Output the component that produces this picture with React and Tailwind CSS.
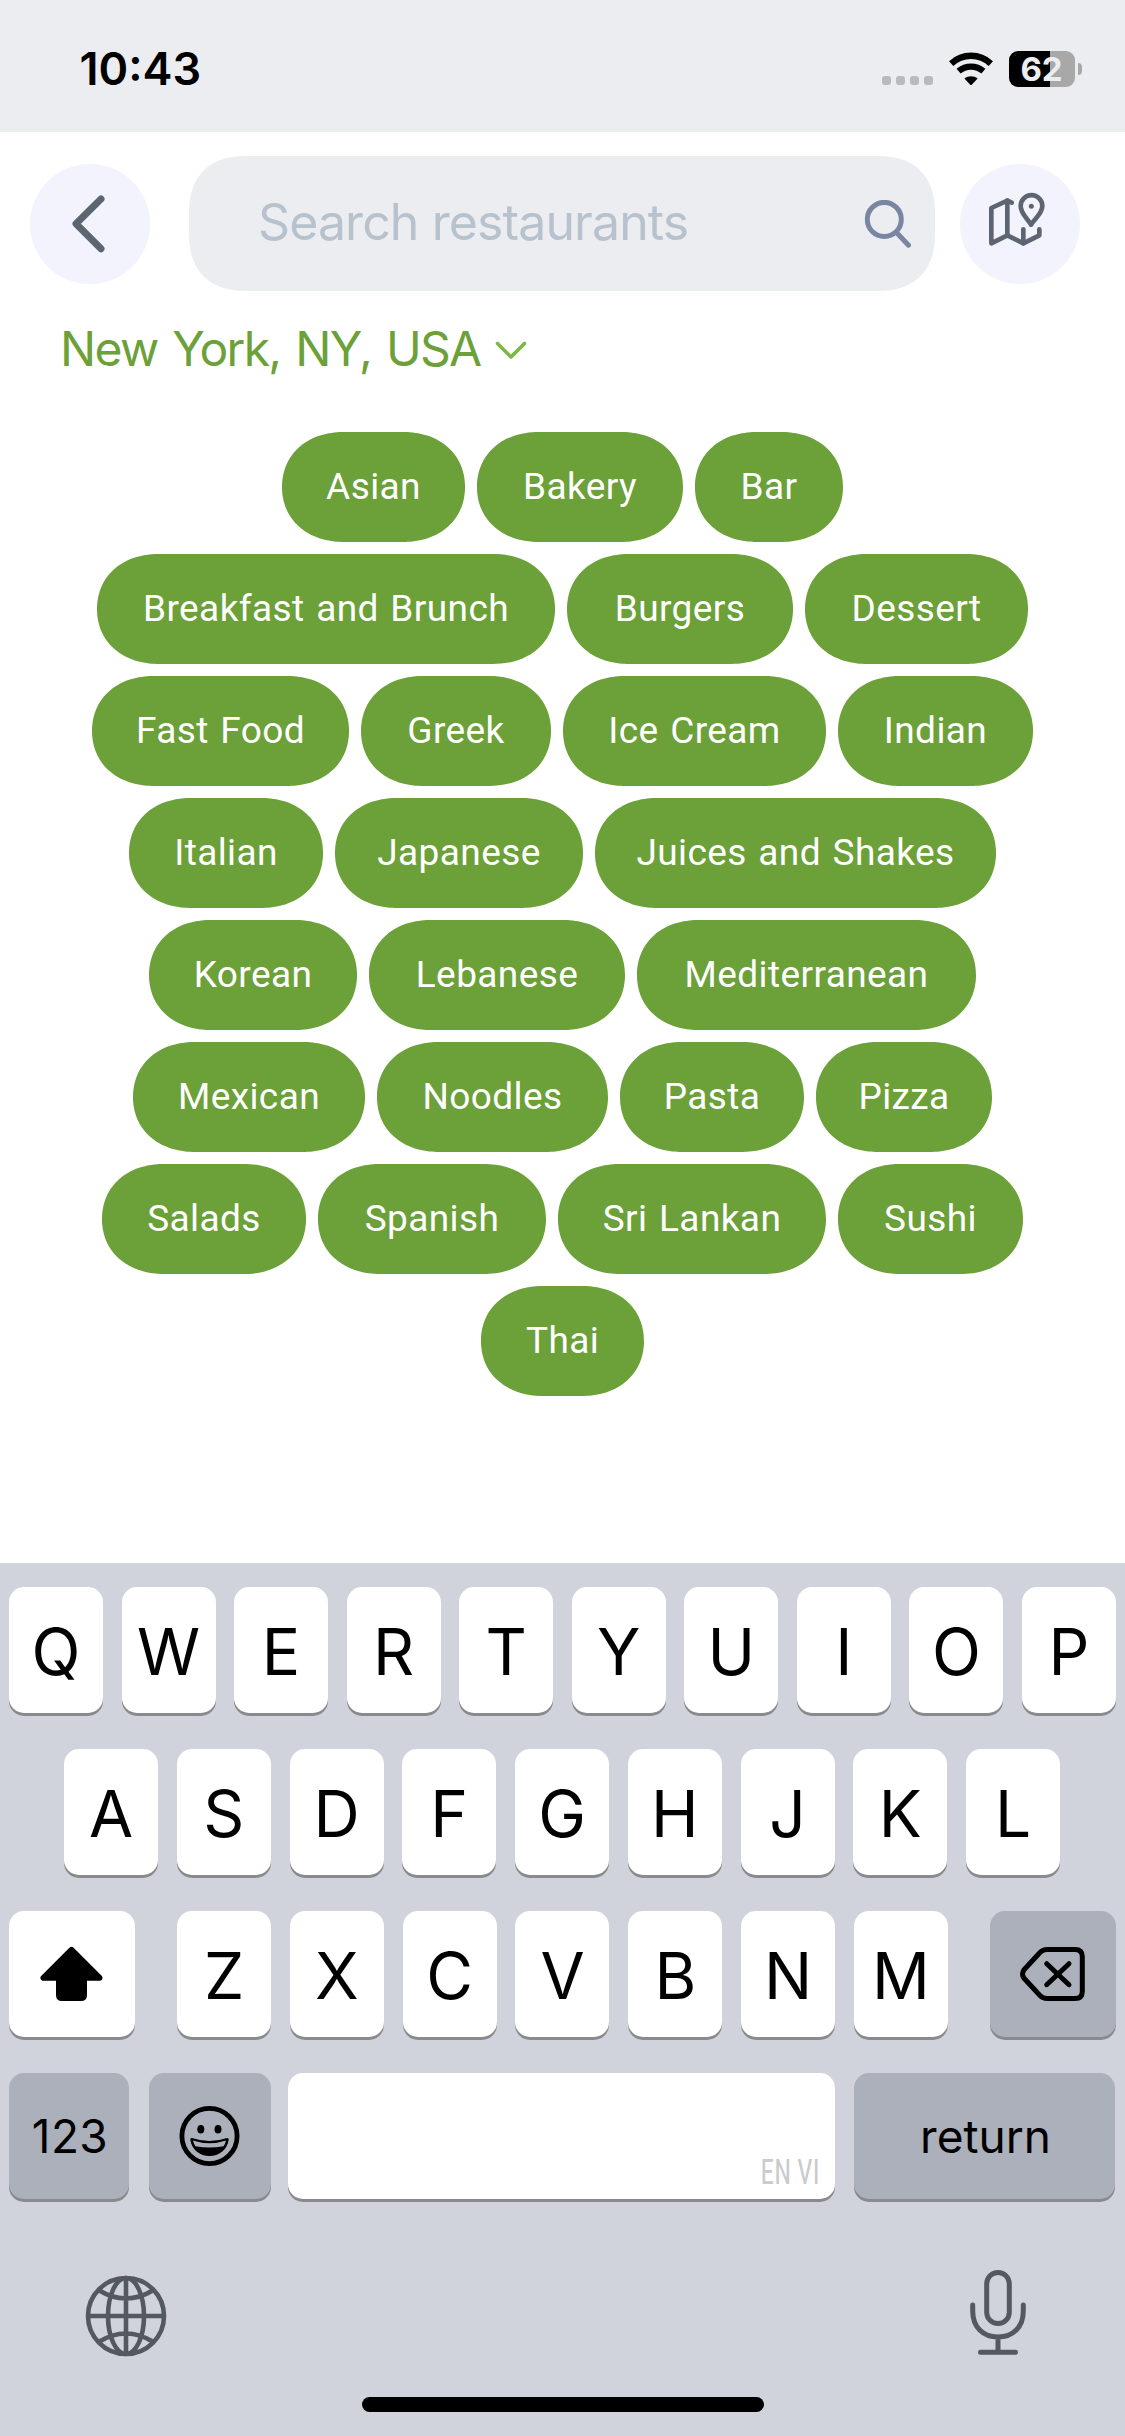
import clsx from 'clsx';

const cuisines = [
    { name: 'Asian', width: 'w-[183px]' },
    { name: 'Bakery', width: 'w-[206px]' },
    { name: 'Bar', width: 'w-[148px]' },
    { name: 'Breakfast and Brunch', width: 'w-[458px]' },
    { name: 'Burgers', width: 'w-[226px]' },
    { name: 'Dessert', width: 'w-[223px]' },
    { name: 'Fast Food', width: 'w-[257px]' },
    { name: 'Greek', width: 'w-[190px]' },
    { name: 'Ice Cream', width: 'w-[263px]' },
    { name: 'Indian', width: 'w-[195px]' },
    { name: 'Italian', width: 'w-[194px]' },
    { name: 'Japanese', width: 'w-[248px]' },
    { name: 'Juices and Shakes', width: 'w-[401px]' },
    { name: 'Korean', width: 'w-[208px]' },
    { name: 'Lebanese', width: 'w-[256px]' },
    { name: 'Mediterranean', width: 'w-[339px]' },
    { name: 'Mexican', width: 'w-[232px]' },
    { name: 'Noodles', width: 'w-[231px]' },
    { name: 'Pasta', width: 'w-[184px]' },
    { name: 'Pizza', width: 'w-[176px]' },
    { name: 'Salads', width: 'w-[204px]' },
    { name: 'Spanish', width: 'w-[228px]' },
    { name: 'Sri Lankan', width: 'w-[268px]' },
    { name: 'Sushi', width: 'w-[185px]' },
    { name: 'Thai', width: 'w-[163px]' },
];

function StatusBar() {
    return (
        <div className="flex h-[132px] shrink-0 items-start justify-between bg-[#ecedf0] pt-[51px] pr-[43px] pl-[79.5px]">
            <span className="text-[45px] leading-9 font-semibold text-black">10:43</span>
            <div className="flex h-9 items-center">
                <div className="mt-[23px] mr-[15px] flex gap-[5px]">
                    <i className="size-[9px] rounded-[3px] bg-[#b9babd]" />
                    <i className="size-[9px] rounded-[3px] bg-[#b9babd]" />
                    <i className="size-[9px] rounded-[3px] bg-[#b9babd]" />
                    <i className="size-[9px] rounded-[3px] bg-[#b9babd]" />
                </div>
                <svg className="mr-[15px] h-[34px] w-[46px]" viewBox="0 0 46 34" fill="none">
                    <path d="M3.2 11.6 C14.5 1.2 31.5 1.2 42.8 11.6" stroke="#000" strokeWidth="6.4" />
                    <path d="M10.6 19.2 C17.8 13 28.2 13 35.4 19.2" stroke="#000" strokeWidth="6.2" />
                    <path d="M16.4 26.6 C20.2 23.4 25.8 23.4 29.6 26.6 L24 32.6 Q23 33.6 22 32.6 Z" fill="#000" />
                </svg>
                <div className="flex h-9 w-[66px] items-center justify-center rounded-[9px] bg-[linear-gradient(90deg,#000_41px,#a8a8a9_41px)]">
                    <span className="pr-px text-[33px] leading-9 font-bold text-[#ecedf0]">62</span>
                </div>
                <i className="ml-[3px] h-3 w-1 rounded-r-full bg-[#a8a8a9]" />
            </div>
        </div>
    );
}

function Header() {
    return (
        <div className="flex items-center pt-6 pr-[45px] pl-[30px]">
            <button className="size-[120px] shrink-0 rounded-full bg-[#f2f3fc]">
                <svg viewBox="90 492 360 360" fill="none" stroke="#5d6573" strokeWidth="21" strokeLinecap="round" strokeLinejoin="round">
                    <path d="M303 597 L228 671 L303 746" />
                </svg>
            </button>
            <div className="ml-[39px] flex h-[135px] w-[746px] items-center justify-between rounded-[58px] bg-[#ebedf1] pr-6 pl-[69px] [corner-shape:superellipse(1.25)]">
                <span className="pb-[3px] text-[50px] leading-[60px] -tracking-[0.9px] text-[#b8c2cd]">Search restaurants</span>
                <svg className="size-12" viewBox="0 0 48 48" fill="none" stroke="#7986a2" strokeWidth="5" strokeLinecap="round">
                    <circle cx="21.3" cy="19.4" r="17" />
                    <path d="M34 33 L45.5 45.2" />
                </svg>
            </div>
            <button className="ml-[25px] size-[120px] shrink-0 rounded-full bg-[#f2f3fc]">
                <svg viewBox="600 492 360 360" fill="none" stroke="#5d6573" strokeWidth="14" strokeLinecap="round" strokeLinejoin="round">
                    <path d="M755 608 L742 602 L694 624 V730 L742 706 L790 730 L838 706 V688" />
                    <path d="M742 602 V706 M790 688 V730" />
                    <path d="M813 674 C803 656 782 641 782 618 A32.5 32.5 0 0 1 847 618 C847 641 824 656 813 674 Z" />
                    <circle cx="814" cy="619" r="7.5" fill="#5d6573" stroke="none" />
                </svg>
            </button>
        </div>
    );
}

function Key({ children, dark, className = 'w-[94px]' }) {
    return (
        <button
            className={clsx(
                'flex h-[126px] shrink-0 items-center justify-center rounded-[15px] shadow-[0_3px_0_#898a8d]',
                dark ? 'bg-[#abb0bb]' : 'bg-white',
                className
            )}
        >
            {children}
        </button>
    );
}

function Letters({ keys }) {
    return keys.split('').map((k) => (
        <Key key={k}>
            <span className="pt-[3px] text-[64px] leading-[78px]">{k}</span>
        </Key>
    ));
}

function Keyboard() {
    return (
        <div className="mt-auto flex h-[873px] shrink-0 flex-col bg-[#d0d3db] px-[9px] pt-6 text-black">
            <div className="flex flex-col gap-9">
                <div className="flex justify-between">
                    <Letters keys="QWERTYUIOP" />
                </div>
                <div className="flex justify-between pr-[56px] pl-[55px]">
                    <Letters keys="ASDFGHJKL" />
                </div>
                <div className="flex justify-between">
                    <Key className="w-[126px]">
                        <svg className="size-[126px]" viewBox="0 0 126 126" strokeWidth="6" stroke="#000" strokeLinejoin="round">
                            <path d="M62.5 39 L34.5 66.8 H50 V84 Q50 87 53 87 H72 Q75 87 75 84 V66.8 H90.5 Z" />
                        </svg>
                    </Key>
                    <div className="flex w-[771px] justify-between">
                        <Letters keys="ZXCVBNM" />
                    </div>
                    <Key dark className="w-[126px]">
                        <svg className="size-[126px]" viewBox="0 0 126 126" fill="none" stroke="#000" strokeWidth="5" strokeLinecap="round" strokeLinejoin="round">
                            <path d="M57 38.5 H85 Q92.3 38.5 92.3 45.5 V80.5 Q92.3 87.5 85 87.5 H57 Q53 87.5 50 84.5 L33.8 67 Q31.2 63 33.8 59 L50 41.5 Q53 38.5 57 38.5 Z" />
                            <path d="M56.7 52.7 L79 73.7 M79 52.7 L56.7 73.7" />
                        </svg>
                    </Key>
                </div>
                <div className="flex gap-[17px]">
                    <Key dark className="mr-[3px] w-[120px]">
                        <span className="pl-0.5 text-[46px] tracking-[0.4px]">123</span>
                    </Key>
                    <Key dark className="w-[122px]">
                        <svg className="h-[126px] w-[122px]" viewBox="0 0 122 126">
                            <circle cx="60.5" cy="63" r="27.6" fill="none" stroke="#000" strokeWidth="4.8" />
                            <ellipse cx="51.8" cy="56.3" rx="3.5" ry="4.3" />
                            <ellipse cx="69" cy="56.3" rx="3.5" ry="4.3" />
                            <path d="M43 65 Q60.5 71 78 65 Q80 65 79.7 67 C78 77 70 83 60.5 83 C51 83 43 77 41.3 67 Q41 64.6 43 65 Z" />
                            <path d="M44 67.5 Q60.5 73 77 67.5 Q76.2 71 74.5 73.2 Q60.5 76 46.5 73.2 Q44.8 71 44 67.5 Z" fill="#abb0bb" />
                        </svg>
                    </Key>
                    <Key className="mr-[2px] w-[547px] !items-end !justify-end pr-4 pb-2">
                        <span className="origin-right scale-x-[0.78] font-['Roboto_Condensed',Roboto,sans-serif] text-[35px] leading-9 text-[#cacacc]">EN VI</span>
                    </Key>
                    <Key dark className="w-[261px]">
                        <span className="pl-0.5 text-[46px]">return</span>
                    </Key>
                </div>
            </div>
            <div className="mt-[69px] flex items-center justify-between pr-[88px] pl-[76px]">
                <svg className="mt-[5px] size-[82px]" viewBox="-41 -41 82 82" fill="none" stroke="#54585f" strokeWidth="4.6">
                    <circle r="38" />
                    <ellipse rx="18" ry="38" />
                    <path d="M0 -38 V38 M-38 0 H38 M-27.5 -26 Q0 -9 27.5 -26 M-27.5 26 Q0 9 27.5 26" />
                </svg>
                <svg className="h-[90px] w-[60px]" viewBox="0 0 60 90" fill="none" stroke="#54585f" strokeWidth="5" strokeLinecap="round">
                    <rect x="18.7" y="4.5" width="22.6" height="51" rx="11.3" />
                    <path d="M4.7 37 V43 C4.7 59 15 69 30 69 C45 69 55.3 59 55.3 43 V37 M30 69 V84 M12.5 84.3 H47.5" />
                </svg>
            </div>
            <div className="mx-auto mt-auto mb-6 h-[15px] w-[402px] rounded-full bg-black" />
        </div>
    );
}

export default function App() {
    return (
        <div className="flex h-[2436px] w-[1125px] flex-col overflow-hidden bg-white font-[Inter,sans-serif]">
            <StatusBar />
            <Header />
            <div className="mt-[28px] mb-px flex h-15 items-center pl-[60px] text-[#6ca038]">
                <span className="text-[48px] leading-[60px] -tracking-[1.7px] [word-spacing:3px]">New York, NY, USA</span>
                <svg className="mt-[4px] ml-[15px] h-5 w-8" viewBox="0 0 32 20" fill="none" stroke="#7cb942" strokeWidth="3.6" strokeLinecap="round" strokeLinejoin="round">
                    <path d="M2.5 2.5 L16 16 L29.5 2.5" />
                </svg>
            </div>
            <div className="mt-[52px] flex flex-wrap justify-center gap-3 px-[72px]">
                {cuisines.map((c) => (
                    <button
                        key={c.name}
                        className={clsx(
                            'h-[110px] rounded-[62px/55px] bg-[#6ca038] font-[Roboto,sans-serif] text-[37px] tracking-[0.4px] whitespace-nowrap text-white [corner-shape:superellipse(1.1)] [word-spacing:2px]',
                            c.width
                        )}
                    >
                        {c.name}
                    </button>
                ))}
            </div>
            <Keyboard />
        </div>
    );
}
